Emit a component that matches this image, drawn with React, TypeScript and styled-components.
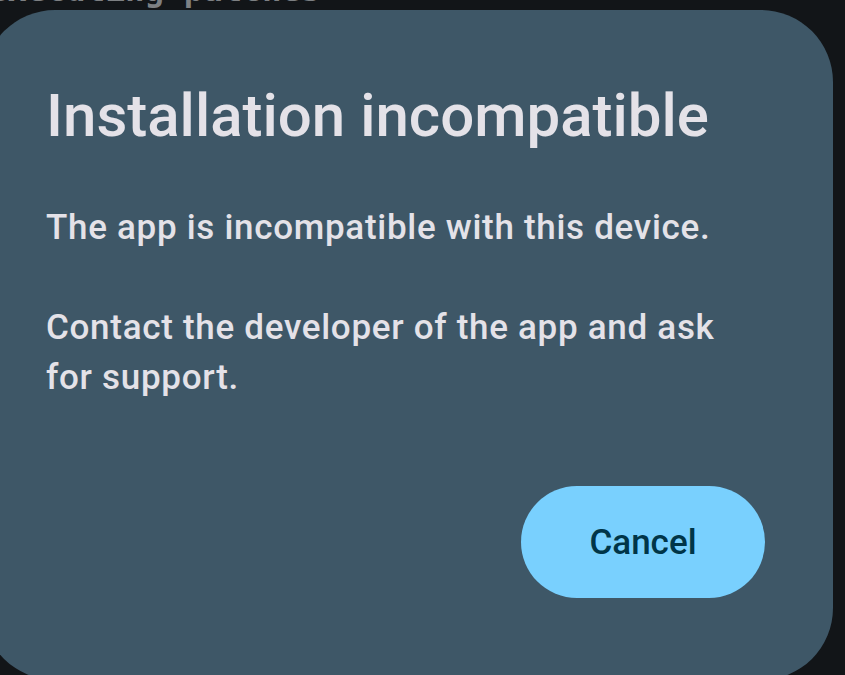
import React from "react";
import styled, { createGlobalStyle } from "styled-components";

const GlobalStyle = createGlobalStyle`
  html, body { margin: 0; padding: 0; background: #121518; }
  body { font-family: Roboto, "Noto Sans", sans-serif; }
`;

const Screen = styled.div`
  position: relative;
  width: 845px;
  height: 675px;
  overflow: hidden;
  background: #121518;
`;

const LogLine = styled.div`
  font-family: "DejaVu Sans Mono", "Liberation Mono", monospace;
  font-size: 32.5px;
  line-height: 40px;
  color: #7d8083;
  font-weight: 700;
  margin-top: -30px;
  margin-left: -12px;
  white-space: pre;
`;

const Overlay = styled.div`
  position: absolute;
  inset: 0;
  padding-top: 10px;
`;

const Dialog = styled.div`
  margin-left: -17px;
  width: 850px;
  height: 670px;
  box-sizing: border-box;
  background: #3e5767;
  border-radius: 72px;
  padding: 66px 68px 82px 63px;
  display: flex;
  flex-direction: column;
`;

const Title = styled.h1`
  margin: 0;
  font-family: Roboto, sans-serif;
  font-weight: 500;
  font-size: 60px;
  line-height: 80px;
  color: #e4e2e8;
`;

const Body = styled.div`
  margin-top: 47px;
  font-family: Roboto, sans-serif;
  font-weight: 500;
  font-size: 35px;
  line-height: 50px;
  letter-spacing: 0.7px;
  color: #e4e2e8;
  white-space: pre-line;
  flex: 1;
`;

const Actions = styled.div`
  display: flex;
  justify-content: flex-end;
`;

const Button = styled.button`
  width: 244px;
  height: 112px;
  border: none;
  border-radius: 56px;
  background: #79d0fe;
  color: #003548;
  font-family: Roboto, sans-serif;
  font-weight: 500;
  font-size: 35px;
  cursor: pointer;
`;

export default function App() {
  return (
    <>
      <GlobalStyle />
      <Screen>
        <LogLine>executing patches</LogLine>
        <Overlay>
          <Dialog>
            <Title>Installation incompatible</Title>
            <Body>
              {"The app is incompatible with this device.\n\nContact the developer of the app and ask for support."}
            </Body>
            <Actions>
              <Button>Cancel</Button>
            </Actions>
          </Dialog>
        </Overlay>
      </Screen>
    </>
  );
}
